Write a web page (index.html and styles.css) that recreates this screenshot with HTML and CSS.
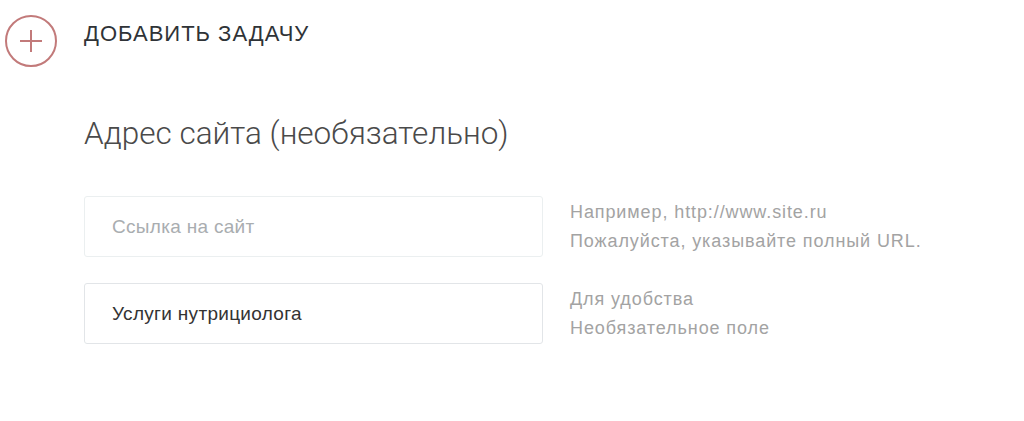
FILE: index.html
```html
<!DOCTYPE html>
<html lang="ru">
<head>
  <meta charset="UTF-8">
  <meta name="viewport" content="width=device-width, initial-scale=1.0">
  <title>Добавить задачу</title>
  <link rel="stylesheet" href="styles.css">
</head>
<body>
  <div class="task-header">
    <span class="add-icon">
      <svg width="52" height="52" viewBox="0 0 52 52">
        <circle cx="26" cy="26" r="25" fill="none" stroke="#c27a7a" stroke-width="2"/>
        <path d="M15 26H37M26 15V37" stroke="#c27a7a" stroke-width="2"/>
      </svg>
    </span>
    <span class="task-title">ДОБАВИТЬ ЗАДАЧУ</span>
  </div>

  <div class="container">
    <h2 class="section-title">Адрес сайта (необязательно)</h2>

    <div class="field-row">
      <input type="text" class="field" placeholder="Ссылка на сайт">
      <div class="hint">
        <p>Например, http://www.site.ru</p>
        <p>Пожалуйста, указывайте полный URL.</p>
      </div>
    </div>

    <div class="field-row">
      <input type="text" class="field field-filled" value="Услуги нутрициолога">
      <div class="hint">
        <p>Для удобства</p>
        <p>Необязательное поле</p>
      </div>
    </div>
  </div>
</body>
</html>
```

FILE: styles.css
```css
body {
  font-family: "Liberation Sans", Arial, sans-serif;
  margin: 0;
  padding: 0;
  background-color: #fff;
}

.task-header {
  display: flex;
  align-items: center;
  padding: 15px 0 0 5px;
}

.add-icon {
  display: block;
  width: 52px;
  height: 52px;
}

.add-icon svg {
  display: block;
}

.task-title {
  margin-left: 27px;
  margin-top: -14px;
  font-family: "Liberation Sans", Arial, sans-serif;
  font-size: 22px;
  letter-spacing: 1px;
  color: #2f3337;
}

.container {
  padding-left: 84px;
}

.section-title {
  margin: 47px 0 42px;
  font-family: Roboto, "Liberation Sans", sans-serif;
  font-weight: 300;
  font-size: 31.5px;
  line-height: 40px;
  color: #4a4a4a;
}

.field-row {
  display: flex;
  align-items: center;
  margin-bottom: 26px;
}

.field {
  box-sizing: border-box;
  width: 459px;
  height: 61px;
  padding: 0 27px;
  font-family: "Liberation Sans", Arial, sans-serif;
  font-size: 19px;
  letter-spacing: 0.3px;
  color: #333;
  border: 1px solid #ebeff0;
  border-radius: 3px;
  outline: none;
}

.field::placeholder {
  color: #a9adb0;
}

.field-filled {
  border-color: #e2e5e8;
}

.hint {
  margin-left: 27px;
  font-size: 18px;
  letter-spacing: 0.9px;
  line-height: 29px;
  color: #a3a3a3;
}

.hint p {
  margin: 0;
}
```
